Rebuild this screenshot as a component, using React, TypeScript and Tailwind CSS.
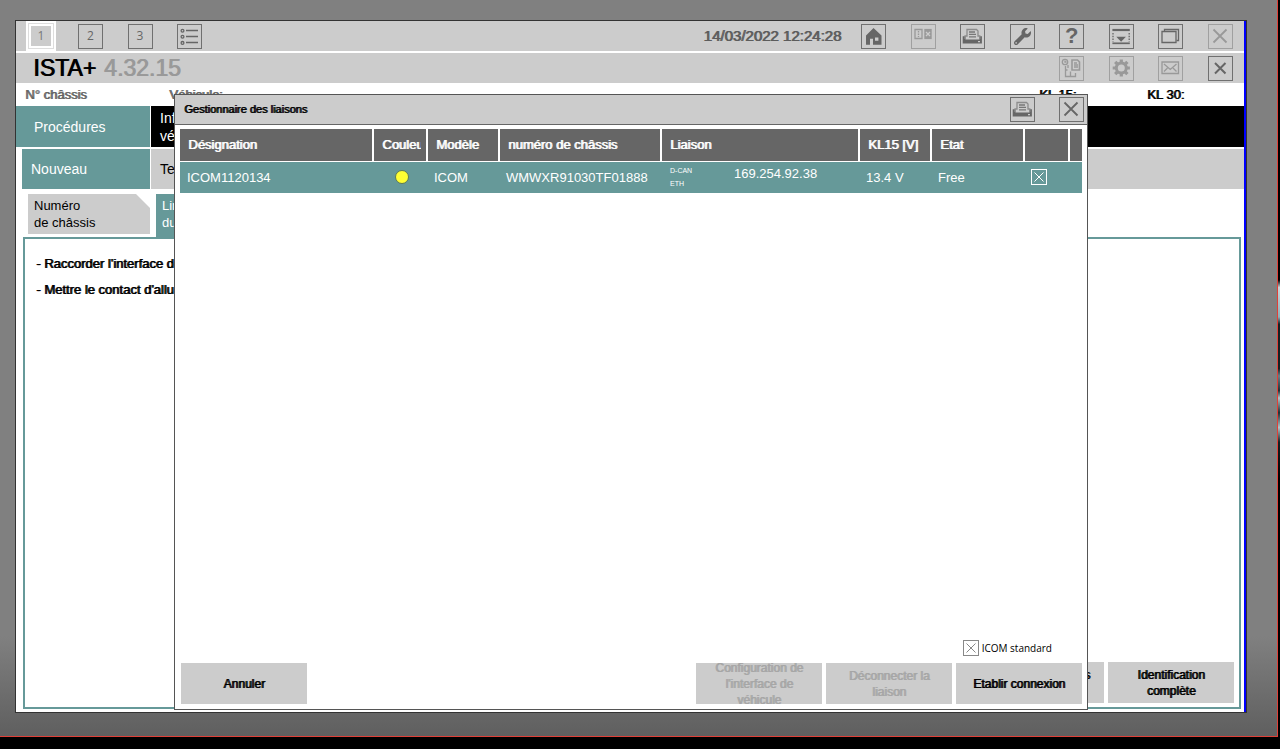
import React from "react";
import clsx from "clsx";
import { FaWrench } from "react-icons/fa";

type IconProps = { children: React.ReactNode };

function Glyph({ children }: IconProps) {
  return (
    <svg
      viewBox="0 0 25 25"
      className="w-[25px] h-[25px] shrink-0"
      fill="none"
      stroke="currentColor"
      strokeWidth="1.3"
    >
      {children}
    </svg>
  );
}

function ListIcon() {
  return (
    <Glyph>
      <circle cx="5.5" cy="6.7" r="1.4" />
      <circle cx="5.5" cy="12.7" r="1.4" />
      <circle cx="5.5" cy="18.9" r="1.4" />
      <path d="M9 6.5h12M9 12.5h12M9 18.5h12" />
    </Glyph>
  );
}

function HomeIcon() {
  return (
    <Glyph>
      <path
        fill="currentColor"
        stroke="none"
        fillRule="evenodd"
        d="M12.5 4l8 7.5v9.3H12v-6H9v6H5v-9.3zM14 13.5v3.2h3.4v-3.2z"
      />
    </Glyph>
  );
}

function BookIcon() {
  return (
    <Glyph>
      <path d="M4 5.5h7v9H4z" />
      <path d="M7.5 7v6" strokeDasharray="1.5 1" />
      <path d="M13.3 4.9h7.4v10.2h-7.4z" fill="currentColor" stroke="none" />
      <path d="M15 8l4 4M19 8l-4 4" stroke="#ccc" />
    </Glyph>
  );
}

function PrintIcon() {
  return (
    <Glyph>
      <path
        d="M2.7 12.2h2.8v3.2h14v-3.2h2.4v7.2H2.7z"
        fill="currentColor"
        stroke="none"
      />
      <path d="M5 15v-3h2V5.5h9.5L18 7v5h1.8v3" stroke="#8c8c8c" />
      <path d="M9 8h6M9 10.4h7M9 12.8h7" stroke="#777" />
      <path d="M18 17.6h2" stroke="#ccc" />
    </Glyph>
  );
}

function DropIcon() {
  return (
    <Glyph>
      <path d="M3.4 6h17.4" strokeWidth="2.2" />
      <path d="M4 9v9M20.2 9v9" strokeDasharray="1.4 1.4" />
      <path d="M7.3 12.8h9.6l-4.8 5z" fill="currentColor" stroke="none" />
      <path d="M3.4 19.3h17.4" strokeWidth="1.7" />
    </Glyph>
  );
}

function WindowsIcon() {
  return (
    <Glyph>
      <path d="M4 7.5h14v11H4z" />
      <path d="M6.5 7V5.5h14v11H18.5" />
    </Glyph>
  );
}

function CloseIcon() {
  return (
    <Glyph>
      <path d="M5.5 5.5l13 13M18.5 5.5l-13 13" strokeWidth="1.8" />
    </Glyph>
  );
}

function SmallCloseIcon() {
  return (
    <Glyph>
      <path d="M7 7l10.5 10.5M17.5 7L7 17.5" strokeWidth="2" />
    </Glyph>
  );
}

function DocsIcon() {
  return (
    <Glyph>
      <circle cx="6" cy="6" r="2.7" />
      <path d="M6 4.5V6h1.5" />
      <path d="M13 4h5.5l2 2v8H13z" strokeWidth="1.6" />
      <path d="M15 7h3M15 9h4M15 11h4" />
      <path d="M6.5 10v4h2M6.5 14v6.5h5v-5M9 9v3M12 20.5h4.5V17" />
    </Glyph>
  );
}

function GearIcon() {
  return (
    <Glyph>
      <circle cx="12.3" cy="12" r="5" strokeWidth="3" />
      <path
        d="M12.3 3.4v3M12.3 17.6v3M3.7 12h3M17.9 12h3M6.2 5.9l2.1 2.1M16.3 16l2.1 2.1M6.2 18.1L8.3 16M16.3 8l2.1-2.1"
        strokeWidth="3.2"
      />
    </Glyph>
  );
}

function MailIcon() {
  return (
    <Glyph>
      <path d="M4 6h16.5v11.5H4z" />
      <path d="M6 8l6.3 5.5L18.5 8M6 15.5l3.5-3.5M18.5 15.5L15 12" />
    </Glyph>
  );
}

type BoxProps = {
  label: string;
  dim?: boolean;
  children: React.ReactNode;
};

function IconBox({ label, dim, children }: BoxProps) {
  return (
    <button
      aria-label={label}
      disabled={dim}
      className={clsx(
        "w-[25px] h-[25px] shrink-0 border flex items-center justify-center",
        dim ? "border-[#a0a0a0] text-[#999]" : "border-[#707070] text-[#666]"
      )}
    >
      {children}
    </button>
  );
}

function CrossCheck({ id, label }: { id: string; label?: string }) {
  return (
    <span className="grid w-4 h-4 shrink-0">
      <input
        id={id}
        type="checkbox"
        defaultChecked
        aria-label={label}
        className="appearance-none w-4 h-4 border border-current col-start-1 row-start-1"
      />
      <svg
        viewBox="0 0 16 16"
        className="w-4 h-4 col-start-1 row-start-1 pointer-events-none"
        stroke="currentColor"
      >
        <path d="M3.5 3.5l9 9M12.5 3.5l-9 9" />
      </svg>
    </span>
  );
}

function ActionButton({
  disabled,
  children,
}: {
  disabled?: boolean;
  children: React.ReactNode;
}) {
  return (
    <button
      disabled={disabled}
      className={clsx(
        "w-[126px] h-[41px] px-3 bg-[#ccc] text-xs leading-4 overflow-hidden flex items-center justify-center text-center [text-shadow:1px_0_0_currentColor]",
        disabled ? "text-[#a6a6a6]" : "text-black"
      )}
    >
      {children}
    </button>
  );
}

const heads = [
  { text: "Désignation", width: "w-[193px]" },
  { text: "Couleur", width: "w-[54px]" },
  { text: "Modèle", width: "w-[72px]" },
  { text: "numéro de châssis", width: "w-[162px]" },
  { text: "Liaison", width: "" },
  { text: "KL15 [V]", width: "w-[72px]" },
  { text: "Etat", width: "w-[93px]" },
  { text: "", width: "w-[45px]" },
  { text: "", width: "w-[13px]" },
];

function ConnectionTable() {
  return (
    <table className="w-full table-fixed border-collapse text-[13px] text-white text-left">
      <thead>
        <tr className="h-8 bg-[#666] border-b border-white">
          {heads.map((head, i) => (
            <th
              key={i}
              className={clsx(
                "p-0 font-normal [text-shadow:1px_0_0_currentColor]",
                head.width,
                i < heads.length - 1 && "border-r-2 border-white"
              )}
            >
              {head.text && (
                <div className="ml-2 mr-[5px] overflow-hidden whitespace-nowrap">
                  {head.text}
                </div>
              )}
            </th>
          ))}
        </tr>
      </thead>
      <tbody>
        <tr className="h-8 bg-[#699]">
          <td className="p-0 pl-[7px]">ICOM1120134</td>
          <td className="p-0">
            <div className="w-[14px] h-[14px] ml-[22px] rounded-full bg-[#ffff33] border border-[#5c7a55]" />
          </td>
          <td className="p-0 pl-[7px]">ICOM</td>
          <td className="p-0 pl-[7px]">WMWXR91030TF01888</td>
          <td className="p-0 pl-[9px]">
            <div className="flex items-start">
              <div className="w-16 text-[7px] leading-[13px]">
                <div>D-CAN</div>
                <div>ETH</div>
              </div>
              <div>169.254.92.38</div>
            </div>
          </td>
          <td className="p-0 pl-[7px]">13.4 V</td>
          <td className="p-0 pl-[7px]">Free</td>
          <td className="p-0 pl-[7px]">
            <CrossCheck id="row-select" label="ICOM1120134" />
          </td>
          <td className="p-0"></td>
        </tr>
      </tbody>
    </table>
  );
}

function ConnectionManager() {
  return (
    <div
      role="dialog"
      aria-labelledby="manager-title"
      className="absolute inset-x-[158px] top-[73px] bottom-[2px] flex flex-col bg-white border border-[#555]"
    >
      <header className="h-[30px] shrink-0 flex items-center justify-between pl-[9px] pr-[3px] bg-[#ccc] border-b border-[#666]">
        <h2
          id="manager-title"
          className="text-[11px] [text-shadow:1px_0_0_currentColor]"
        >
          Gestionnaire des liaisons
        </h2>
        <div className="flex w-[74px] justify-between">
          <IconBox label="Imprimer">
            <PrintIcon />
          </IconBox>
          <IconBox label="Fermer">
            <CloseIcon />
          </IconBox>
        </div>
      </header>
      <div className="flex-1 pt-1 px-[5px]">
        <ConnectionTable />
      </div>
      <div className="flex items-center justify-end gap-[3px] mr-[35px] mb-[7px] text-[#888]">
        <CrossCheck id="icom-standard" />
        <label
          htmlFor="icom-standard"
          className="text-[10px] leading-4 text-black font-['Open_Sans',sans-serif]"
        >
          ICOM standard
        </label>
      </div>
      <footer className="flex justify-between pl-[6px] pr-[5px] pb-[5px]">
        <ActionButton>Annuler</ActionButton>
        <div className="flex gap-1">
          <ActionButton disabled>
            Configuration de l'interface de véhicule
          </ActionButton>
          <ActionButton disabled>Déconnecter la liaison</ActionButton>
          <ActionButton>
            <span className="whitespace-nowrap">Etablir connexion</span>
          </ActionButton>
        </div>
      </footer>
    </div>
  );
}

function Toolbar() {
  return (
    <div className="h-[32px] shrink-0 flex items-center justify-between pl-[10px] pr-[11px] bg-[#ccc] border-b-2 border-white">
      <div className="flex items-center gap-[22px] font-['Open_Sans',sans-serif] text-xs">
        <button className="w-[30px] h-[30px] p-px border-2 border-white bg-[#ddd] text-[#777]">
          <span className="flex w-full h-full items-center justify-center bg-[#ccc] border-2 border-white">
            1
          </span>
        </button>
        <div className="flex w-[124px] justify-between">
          <IconBox label="Opération 2">2</IconBox>
          <IconBox label="Opération 3">3</IconBox>
          <IconBox label="Liste">
            <ListIcon />
          </IconBox>
        </div>
      </div>
      <div className="flex items-center gap-5">
        <span className="text-[15px] text-[#5c5c5c] [text-shadow:1px_0_0_currentColor]">
          14/03/2022 12:24:28
        </span>
        <div className="flex w-[372px] justify-between">
          <IconBox label="Accueil">
            <HomeIcon />
          </IconBox>
          <IconBox label="Manuel" dim>
            <BookIcon />
          </IconBox>
          <IconBox label="Imprimer">
            <PrintIcon />
          </IconBox>
          <IconBox label="Réglages">
            <FaWrench size={17} />
          </IconBox>
          <IconBox label="Aide">
            <span className="text-[22px] leading-6 font-bold">?</span>
          </IconBox>
          <IconBox label="Réduire">
            <DropIcon />
          </IconBox>
          <IconBox label="Fenêtres">
            <WindowsIcon />
          </IconBox>
          <IconBox label="Quitter" dim>
            <CloseIcon />
          </IconBox>
        </div>
      </div>
    </div>
  );
}

function TitleBar() {
  return (
    <div className="h-[30px] shrink-0 flex items-center justify-between pl-[17px] pr-[11px] bg-[#ccc]">
      <h1 className="flex gap-2 text-[23px] [text-shadow:1px_0_0_currentColor]">
        <span>ISTA+</span>
        <span className="text-[#999]">4.32.15</span>
      </h1>
      <div className="flex w-[174px] justify-between">
        <IconBox label="Documents" dim>
          <DocsIcon />
        </IconBox>
        <IconBox label="Paramètres" dim>
          <GearIcon />
        </IconBox>
        <IconBox label="Message" dim>
          <MailIcon />
        </IconBox>
        <IconBox label="Fermer l'opération">
          <SmallCloseIcon />
        </IconBox>
      </div>
    </div>
  );
}

function Navigation() {
  return (
    <nav className="shrink-0 text-sm leading-[18px]">
      <div className="flex h-[41px] gap-px">
        <button className="w-[134px] pl-[18px] bg-[#699] text-white text-left">
          Procédures
        </button>
        <div className="flex-1 flex bg-black">
          <button className="w-[126px] pl-[9px] text-white text-left">
            Informations véhicule
          </button>
        </div>
      </div>
      <div className="flex h-10 gap-px mt-[2px] pl-[6px]">
        <button className="w-[128px] pl-[9px] bg-[#699] text-white text-left">
          Nouveau
        </button>
        <div className="flex-1 flex bg-[#ccc]">
          <button className="w-[126px] pl-[9px] text-left">Tests</button>
        </div>
      </div>
      <div className="flex h-12 gap-[6px] pt-[5px] pl-3 text-[13px] leading-[17px]">
        <button className="w-[122px] h-10 pl-[6px] bg-[#ccc] text-left [clip-path:polygon(0_0,calc(100%-14px)_0,100%_14px,100%_100%,0_100%)]">
          Numéro
          <br />
          de châssis
        </button>
        <button className="w-[122px] h-[43px] pb-[3px] pl-[6px] bg-[#699] text-white text-left">
          Lire données
          <br />
          du véhicule
        </button>
      </div>
    </nav>
  );
}

function App() {
  return (
    <div className="h-screen flex bg-black pb-3 text-black font-['Liberation_Sans',Arial,sans-serif]">
      <div className="flex-1 flex pt-5 pl-[15px] pr-[30px] pb-[23px] border-r border-b border-[#e04038] bg-[linear-gradient(to_top,#5f5f5f,#808080_100px)]">
        <div className="relative flex-1 flex flex-col border border-[#333] bg-white">
          <div className="flex-1 flex flex-col border-r-2 border-[#0000ff]">
            <Toolbar />
            <TitleBar />
            <div className="h-[23px] shrink-0 flex items-center justify-between pl-[9px] pr-[60px] text-[13px] [text-shadow:1px_0_0_currentColor]">
              <div className="flex text-[#666]">
                <span className="w-36">N° châssis</span>
                <span>Véhicule:</span>
              </div>
              <div className="flex">
                <span className="w-[108px]">KL 15:</span>
                <span>KL 30:</span>
              </div>
            </div>
            <Navigation />
            <main className="flex-1 flex flex-col justify-between ml-[7px] mr-[3px] mb-[3px] border-2 border-[#699]">
              <ul className="pt-3 pl-[11px] text-[13px] leading-[26px] [text-shadow:1px_0_0_currentColor]">
                <li>- Raccorder l'interface de véhicule</li>
                <li>- Mettre le contact d'allumage</li>
              </ul>
              <div className="flex justify-end gap-1 pr-[5px] pb-1">
                <ActionButton>
                  <span className="whitespace-nowrap">
                    Saisir les données
                    <br />
                    du véhicule
                  </span>
                </ActionButton>
                <ActionButton>Identification complète</ActionButton>
              </div>
            </main>
          </div>
          <ConnectionManager />
        </div>
      </div>
      {/* sliver of the desktop wallpaper */}
      <div className="w-[2px] bg-[linear-gradient(to_bottom,#000_38%,#c8d4d8_39%,#8fb0b8_43%,#142022_44%,#142022_50%,#6a8088_51%,#203034_53%,#b0c4c8_54%,#203034_56%,#b0c4c8_58%,#142022_60%,#000_65%)]" />
    </div>
  );
}

export default App;
